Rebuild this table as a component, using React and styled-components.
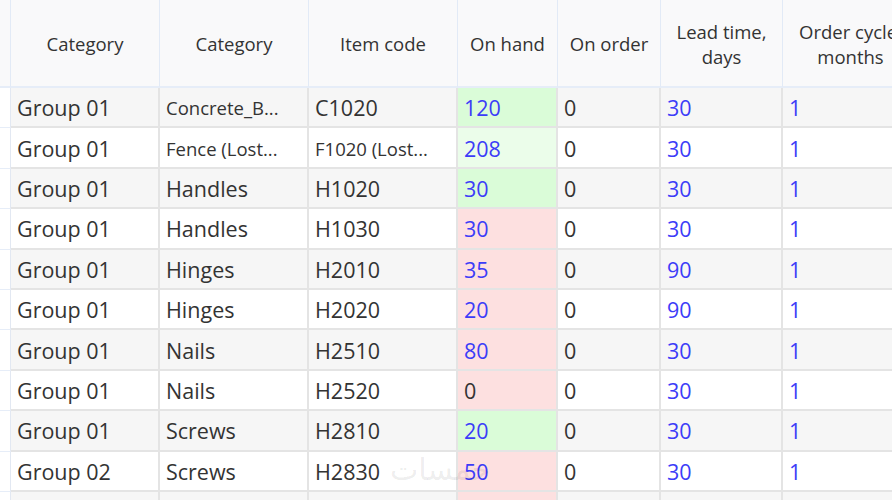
import React from "react";
import styled, { createGlobalStyle } from "styled-components";

const GlobalStyle = createGlobalStyle`
  html, body {
    margin: 0;
    padding: 0;
    background: #ffffff;
    overflow: hidden;
  }
  body {
    font-family: "Open Sans", "Noto Sans", sans-serif;
  }
`;

const columns = "11px 149px 149px 149px 100px 103px 122px 136px 120px";

const Viewport = styled.div`
  position: relative;
  width: 892px;
  height: 500px;
  overflow: hidden;
`;

const Grid = styled.div`
  display: grid;
  grid-template-columns: ${columns};
  width: max-content;
`;

const HeaderCell = styled.div`
  box-sizing: border-box;
  height: 88px;
  display: flex;
  align-items: center;
  justify-content: center;
  text-align: center;
  padding-top: 1px;
  background: #f9f9fa;
  border-right: 1px solid #e2eaf6;
  border-bottom: 2px solid #e6edf8;
  color: #333;
  font-size: 18.5px;
  line-height: 25px;
  white-space: pre-line;
`;

const Gutter = styled.div`
  box-sizing: border-box;
  height: 40.4px;
  background: #ffffff;
  border-right: 1px solid #e2e8f2;
  border-bottom: 1px solid #e6edf8;
`;

const Cell = styled.div`
  box-sizing: border-box;
  height: 40.4px;
  display: flex;
  align-items: center;
  padding: 1px 5px 0 6px;
  overflow: hidden;
  white-space: nowrap;
  background: ${(p) => p.$bg || (p.$odd ? "#f6f6f6" : "#ffffff")};
  border-right: 2px solid #e4e4e4;
  border-bottom: 2px solid #e4e4e4;
  color: ${(p) => (p.$blue ? "#3c3cf8" : "#333")};
  font-size: ${(p) => (p.$small ? "18.5px" : "21.5px")};
`;

const Watermark = styled.div`
  position: absolute;
  left: 390px;
  top: 452px;
  font-family: "DejaVu Sans", sans-serif;
  font-size: 30px;
  color: rgba(0, 0, 0, 0.08);
  pointer-events: none;
`;

const GREEN = "#dafcd8";
const LIGHT_GREEN = "#ebfdea";
const PINK = "#fde0e0";

const rows = [
  { g: "Group 01", cat: "Concrete_B...", code: "C1020", hand: "120", bg: GREEN, lead: "30", small: true },
  { g: "Group 01", cat: "Fence (Lost...", code: "F1020 (Lost...", hand: "208", bg: LIGHT_GREEN, lead: "30", small: true },
  { g: "Group 01", cat: "Handles", code: "H1020", hand: "30", bg: GREEN, lead: "30" },
  { g: "Group 01", cat: "Handles", code: "H1030", hand: "30", bg: PINK, lead: "30" },
  { g: "Group 01", cat: "Hinges", code: "H2010", hand: "35", bg: PINK, lead: "90" },
  { g: "Group 01", cat: "Hinges", code: "H2020", hand: "20", bg: PINK, lead: "90" },
  { g: "Group 01", cat: "Nails", code: "H2510", hand: "80", bg: PINK, lead: "30" },
  { g: "Group 01", cat: "Nails", code: "H2520", hand: "0", bg: PINK, lead: "30", zero: true },
  { g: "Group 01", cat: "Screws", code: "H2810", hand: "20", bg: GREEN, lead: "30" },
  { g: "Group 02", cat: "Screws", code: "H2830", hand: "50", bg: PINK, lead: "30" },
  { g: "Group 02", cat: "Screws", code: "H2840", hand: "40", bg: PINK, lead: "30" },
];

const headers = [
  "",
  "Category",
  "Category",
  "Item code",
  "On hand",
  "On order",
  "Lead time,\ndays",
  "Order cycle,\nmonths",
  "",
];

export default function App() {
  return (
    <Viewport>
      <GlobalStyle />
      <Grid>
        {headers.map((h, i) => (
          <HeaderCell key={"h" + i}>{h}</HeaderCell>
        ))}
        {rows.map((r, i) => {
          const odd = i % 2 === 0;
          return (
            <React.Fragment key={i}>
              <Gutter />
              <Cell $odd={odd}>{r.g}</Cell>
              <Cell $odd={odd} $small={r.small}>{r.cat}</Cell>
              <Cell $odd={odd} $small={r.small && r.code.length > 6}>{r.code}</Cell>
              <Cell $odd={odd} $bg={r.bg} $blue={!r.zero}>{r.hand}</Cell>
              <Cell $odd={odd}>0</Cell>
              <Cell $odd={odd} $blue>{r.lead}</Cell>
              <Cell $odd={odd} $blue>1</Cell>
              <Cell $odd={odd} />
            </React.Fragment>
          );
        })}
      </Grid>
      <Watermark>خمسات</Watermark>
    </Viewport>
  );
}
